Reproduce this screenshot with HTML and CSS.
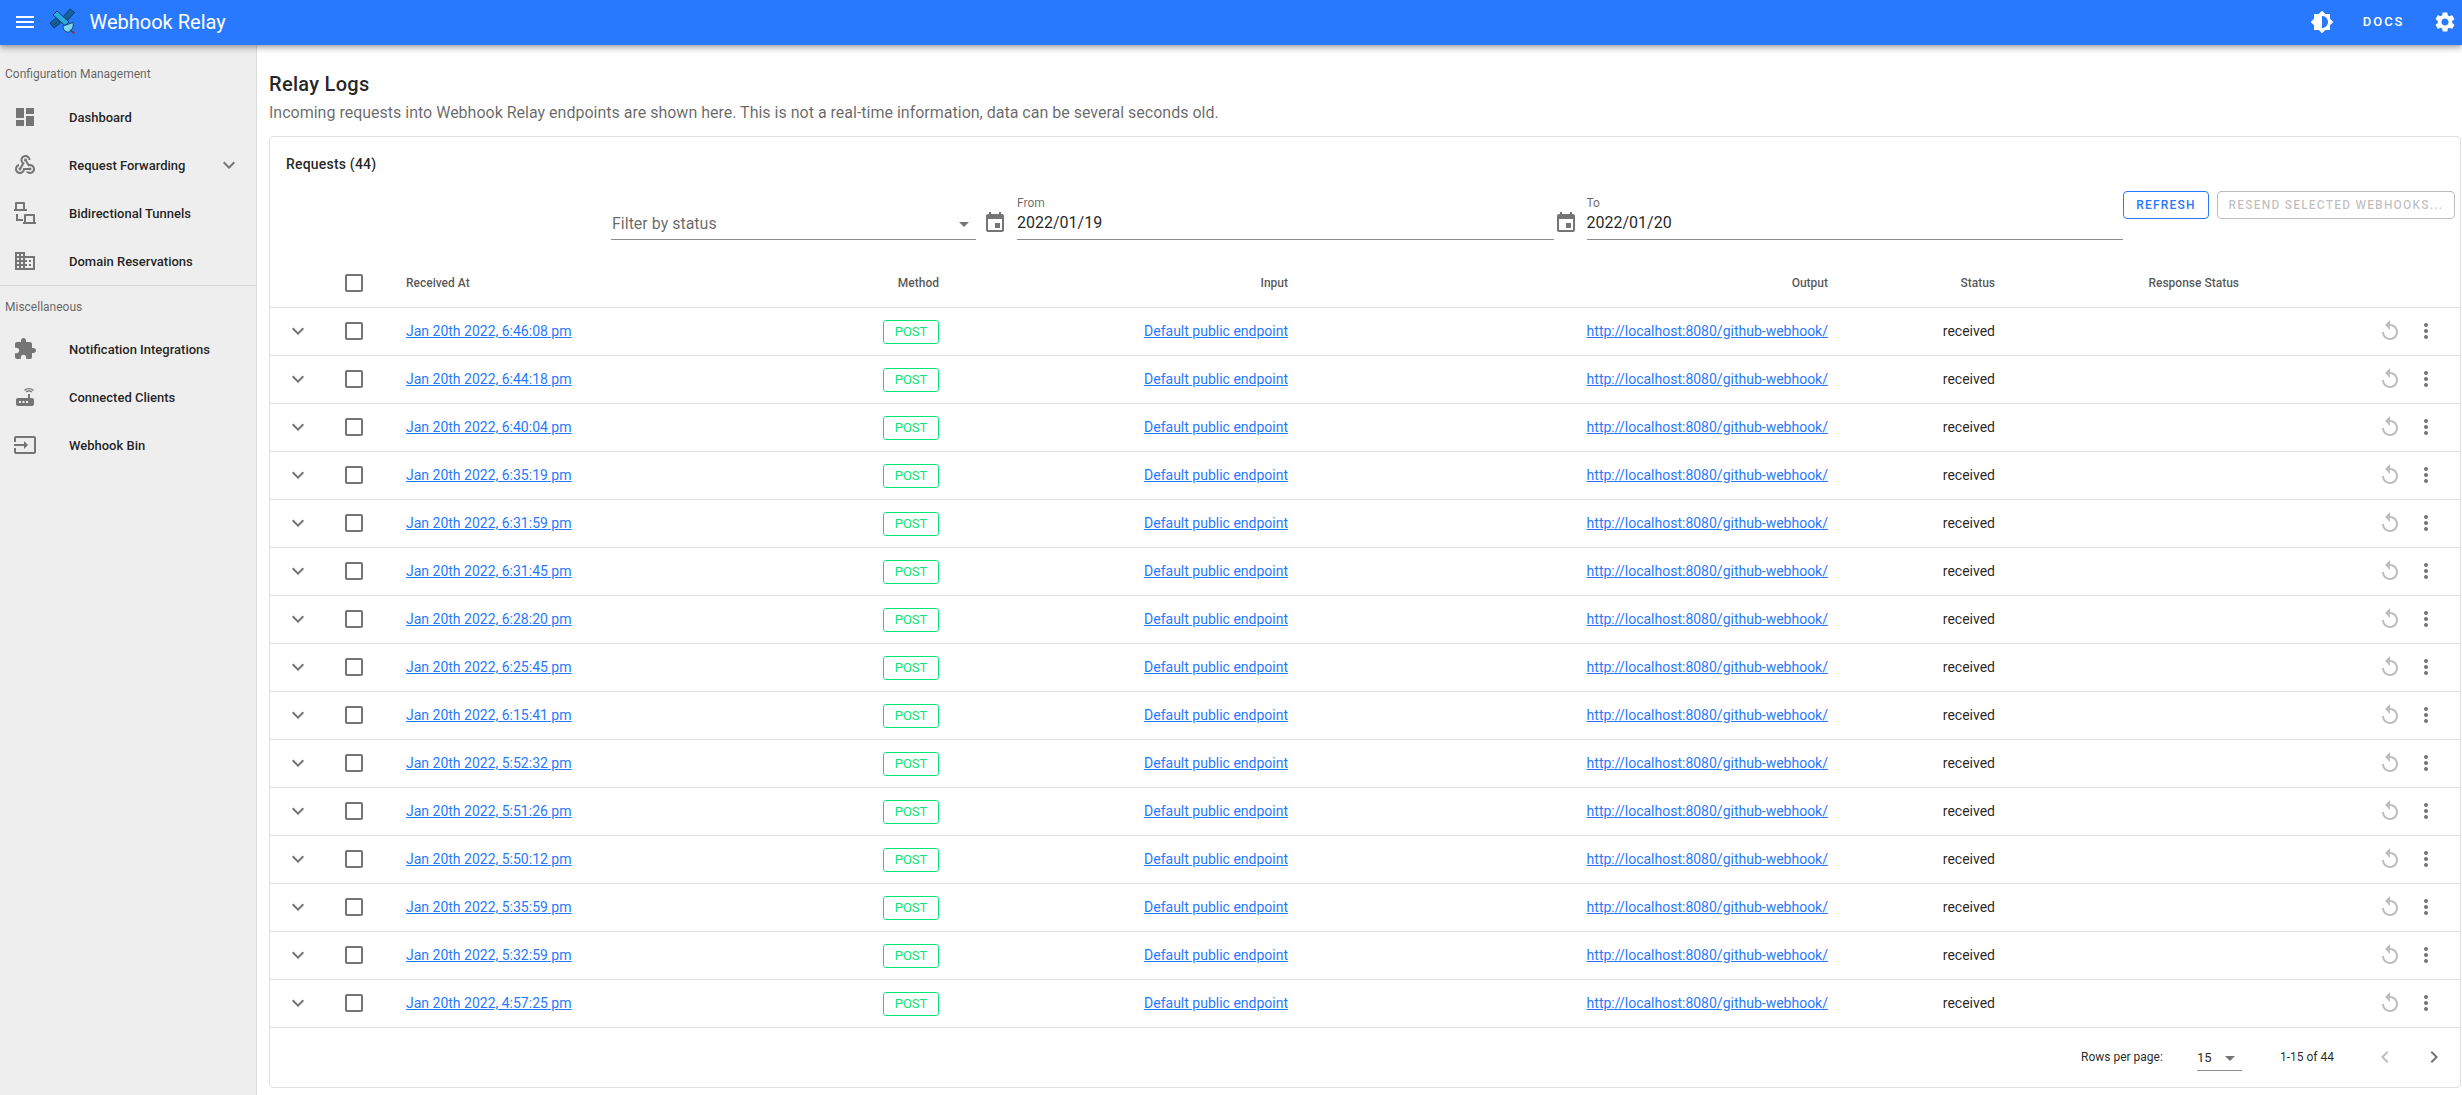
FILE: index.html
```html
<!DOCTYPE html>
<html lang="en">
<head>
<meta charset="utf-8">
<title>Webhook Relay</title>
<link rel="stylesheet" href="styles.css">
</head>
<body>
<svg class="sprite" xmlns="http://www.w3.org/2000/svg">
<symbol id="i-menu" viewBox="0 0 24 24"><path d="M3 18h18v-2H3v2zm0-5h18v-2H3v2zm0-7v2h18V6H3z"/></symbol>
<symbol id="i-dash" viewBox="0 0 24 24"><path d="M3 13h8V3H3v10zm0 8h8v-6H3v6zm10 0h8V11h-8v10zm0-18v6h8V3h-8z"/></symbol>
<symbol id="i-hook" viewBox="0 0 24 24"><path d="M10 15h5.88c.27-.31.67-.5 1.12-.5.83 0 1.5.67 1.5 1.5s-.67 1.5-1.5 1.5c-.44 0-.84-.19-1.12-.5H11.9c-.46 2.28-2.48 4-4.9 4-2.76 0-5-2.24-5-5 0-2.42 1.72-4.44 4-4.9v2.07C4.84 13.58 4 14.7 4 16c0 1.65 1.35 3 3 3s3-1.35 3-3v-1zm2.5-11c1.65 0 3 1.35 3 3h2c0-2.76-2.24-5-5-5s-5 2.24-5 5c0 1.43.6 2.71 1.55 3.62l-2.35 3.9c-.68.14-1.2.75-1.2 1.48 0 .83.67 1.5 1.5 1.5s1.5-.67 1.5-1.5c0-.16-.02-.31-.07-.45l3.38-5.63C10.49 9.61 9.5 8.42 9.5 7c0-1.65 1.35-3 3-3zm4.5 9c-.64 0-1.23.2-1.72.54l-3.05-5.07C11.53 8.35 11 7.74 11 7c0-.83.67-1.5 1.5-1.5S14 6.17 14 7c0 .15-.02.29-.06.43l2.19 3.65c.28-.05.57-.08.87-.08 2.76 0 5 2.24 5 5s-2.24 5-5 5c-1.85 0-3.47-1.01-4.33-2.5h2.67c.48.32 1.05.5 1.66.5 1.65 0 3-1.35 3-3s-1.35-3-3-3z"/></symbol>
<symbol id="i-tunnel" viewBox="0 0 24 24"><path d="M3 1h8a1 1 0 0 1 1 1v6h2v2H1V8h1V2a1 1 0 0 1 1-1zm1 2v5h6V3H4zM12 13h9a1 1 0 0 1 1 1v7h1v2H10v-2h1v-7a1 1 0 0 1 1-1zm1 2v6h7v-6h-7zM3 13h2v5h5v2H3v-7z"/></symbol>
<symbol id="i-domain" viewBox="0 0 24 24"><path d="M12 7V3H2v18h20V7H12zM6 19H4v-2h2v2zm0-4H4v-2h2v2zm0-4H4V9h2v2zm0-4H4V5h2v2zm4 12H8v-2h2v2zm0-4H8v-2h2v2zm0-4H8V9h2v2zm0-4H8V5h2v2zm10 12h-8v-2h2v-2h-2v-2h2v-2h-2V9h8v10zm-2-8h-2v2h2v-2zm0 4h-2v2h2v-2z"/></symbol>
<symbol id="i-ext" viewBox="0 0 24 24"><path d="M20.500 11H19V7c0-1.100-.9-2-2-2h-4V3.500C13 2.120 11.880 1 10.500 1S8 2.120 8 3.500V5H4c-1.100 0-1.990.9-1.990 2v3.800H3.500c1.490 0 2.700 1.210 2.700 2.700s-1.210 2.700-2.700 2.700H2V20c0 1.100.9 2 2 2h3.800v-1.500c0-1.490 1.210-2.700 2.700-2.700 1.490 0 2.700 1.210 2.700 2.700V22H17c1.100 0 2-.9 2-2v-4h1.500c1.380 0 2.500-1.120 2.500-2.500S21.880 11 20.500 11z"/></symbol>
<symbol id="i-router" viewBox="0 0 24 24"><path d="M20.200 5.900l.8-.8C19.600 3.700 17.800 3 16 3s-3.600.7-5 2.100l.8.8C13 4.800 14.500 4.200 16 4.200s3 .6 4.200 1.700zm-.9.8c-.9-.9-2.100-1.400-3.300-1.400s-2.400.5-3.300 1.400l.8.8c.7-.7 1.600-1 2.500-1 .9 0 1.800.3 2.500 1l.8-.8zM19 13h-2V9h-2v4H5c-1.100 0-2 .9-2 2v4c0 1.100.9 2 2 2h14c1.100 0 2-.9 2-2v-4c0-1.100-.9-2-2-2zM8 18H6v-2h2v2zm3.500 0h-2v-2h2v2zm3.500 0h-2v-2h2v2z"/></symbol>
<symbol id="i-input" viewBox="0 0 24 24"><path d="M21 3.010H3c-1.100 0-2 .9-2 2V9h2V4.990h18v14.030H3V15H1v4.010c0 1.100.9 1.980 2 1.980h18c1.100 0 2-.88 2-1.980v-14c0-1.110-.9-2-2-2zM11 16l4-4-4-4v3H1v2h10v3z"/></symbol>
<symbol id="i-bright" viewBox="0 0 24 24"><path d="M20 15.310L23.310 12 20 8.690V4h-4.690L12 .69 8.690 4H4v4.690L.69 12 4 15.310V20h4.690L12 23.310 15.310 20H20v-4.690zM12 18V6c3.310 0 6 2.690 6 6s-2.690 6-6 6z"/></symbol>
<symbol id="i-gear" viewBox="0 0 24 24"><path d="M19.140 12.940c.04-.3.06-.61.06-.94 0-.32-.02-.64-.07-.94l2.030-1.580c.18-.14.23-.41.12-.61l-1.920-3.320c-.12-.22-.37-.29-.59-.22l-2.390.96c-.5-.38-1.030-.7-1.620-.94l-.36-2.540c-.04-.24-.24-.41-.48-.41h-3.840c-.24 0-.43.17-.47.41l-.36 2.540c-.59.24-1.130.57-1.620.94l-2.390-.96c-.22-.08-.47 0-.59.22L2.740 8.870c-.12.21-.08.47.12.61l2.030 1.580c-.05.3-.09.63-.09.94s.02.64.07.94l-2.030 1.580c-.18.14-.23.41-.12.61l1.920 3.320c.12.22.37.29.59.22l2.390-.96c.5.38 1.030.7 1.620.94l.36 2.540c.05.24.24.41.48.41h3.840c.24 0 .44-.17.47-.41l.36-2.540c.59-.24 1.130-.56 1.620-.94l2.390.96c.22.08.47 0 .59-.22l1.920-3.320c.12-.22.07-.47-.12-.61l-2.010-1.580zM12 15.600c-1.980 0-3.600-1.620-3.600-3.600s1.620-3.600 3.600-3.600 3.600 1.620 3.600 3.600-1.620 3.600-3.600 3.600z"/></symbol>
<symbol id="i-replay" viewBox="0 0 24 24"><path d="M12 5V1L7 6l5 5V7c3.310 0 6 2.690 6 6s-2.690 6-6 6-6-2.690-6-6H4c0 4.420 3.580 8 8 8s8-3.580 8-8-3.580-8-8-8z"/></symbol>
<symbol id="i-more" viewBox="0 0 24 24"><path d="M12 8c1.100 0 2-.9 2-2s-.9-2-2-2-2 .9-2 2 .9 2 2 2zm0 2c-1.100 0-2 .9-2 2s.9 2 2 2 2-.9 2-2-.9-2-2-2zm0 6c-1.100 0-2 .9-2 2s.9 2 2 2 2-.9 2-2-.9-2-2-2z"/></symbol>
<symbol id="i-check" viewBox="0 0 24 24"><path d="M19 5v14H5V5h14m0-2H5c-1.100 0-2 .9-2 2v14c0 1.100.9 2 2 2h14c1.100 0 2-.9 2-2V5c0-1.100-.9-2-2-2z"/></symbol>
<symbol id="i-down" viewBox="0 0 24 24"><path d="M16.590 8.590L12 13.170 7.410 8.590 6 10l6 6 6-6z"/></symbol>
<symbol id="i-event" viewBox="0 0 24 24"><path d="M17 12h-5v5h5v-5zM16 1v2H8V1H6v2H5c-1.110 0-1.990.9-1.990 2L3 19c0 1.100.89 2 2 2h14c1.100 0 2-.9 2-2V5c0-1.100-.9-2-2-2h-1V1h-2zm3 18H5V8h14v11z"/></symbol>
<symbol id="i-drop" viewBox="0 0 24 24"><path d="M7 10l5 5 5-5z"/></symbol>
<symbol id="i-left" viewBox="0 0 24 24"><path d="M15.410 7.410L14 6l-6 6 6 6 1.410-1.410L10.830 12z"/></symbol>
<symbol id="i-right" viewBox="0 0 24 24"><path d="M10 6L8.590 7.410 13.170 12l-4.580 4.590L10 18l6-6z"/></symbol>
</svg>

<header class="appbar">
  <svg class="ico ico-white menu-btn"><use href="#i-menu"/></svg>
  <svg class="logo" viewBox="0 0 40 32">
    <g stroke="#0b2f55" stroke-width=".8" stroke-linejoin="round">
      <path d="M19 13l7-8 4.500 3.500-7.500 8.500z" fill="#14629c"/>
      <path d="M6 19l6-5 4.500 5-6.500 5z" fill="#14629c"/>
      <path d="M9 11l4-4 12 11-4 3.500z" fill="#29abe2"/>
      <path d="M19 22l10-3.500c1.500 5-3 10.500-6 9.500-3-1-4-3-4-6z" fill="#7fd4f2"/>
      <path d="M22.500 16l2-2M10 21l3-3" fill="none"/>
    </g>
    <path d="M26 25.500l3 3" stroke="#222" stroke-width="1"/>
    <circle cx="29.500" cy="28.500" r="1.200" fill="#b3202a"/>
  </svg>
  <span class="brand">Webhook Relay</span>
  <span class="spacer"></span>
  <svg class="ico ico-white bright-btn"><use href="#i-bright"/></svg>
  <span class="docs">DOCS</span>
  <svg class="ico ico-white gear-btn"><use href="#i-gear"/></svg>
</header>

<div class="shell">
  <nav class="sidebar">
    <div class="nav-head nav-head-first">Configuration Management</div>
    <a class="nav-item"><svg class="ico ico-grey"><use href="#i-dash"/></svg><span>Dashboard</span></a>
    <a class="nav-item"><svg class="ico ico-grey"><use href="#i-hook"/></svg><span>Request Forwarding</span><svg class="ico ico-grey nav-chev"><use href="#i-down"/></svg></a>
    <a class="nav-item"><svg class="ico ico-grey"><use href="#i-tunnel"/></svg><span>Bidirectional Tunnels</span></a>
    <a class="nav-item"><svg class="ico ico-grey"><use href="#i-domain"/></svg><span>Domain Reservations</span></a>
    <hr class="nav-div">
    <div class="nav-head">Miscellaneous</div>
    <a class="nav-item"><svg class="ico ico-grey"><use href="#i-ext"/></svg><span>Notification Integrations</span></a>
    <a class="nav-item"><svg class="ico ico-grey"><use href="#i-router"/></svg><span>Connected Clients</span></a>
    <a class="nav-item"><svg class="ico ico-grey"><use href="#i-input"/></svg><span>Webhook Bin</span></a>
  </nav>

  <main class="main">
    <h1 class="page-title">Relay Logs</h1>
    <p class="page-desc">Incoming requests into Webhook Relay endpoints are shown here. This is not a real-time information, data can be several seconds old.</p>

    <section class="card">
      <h2 class="card-title">Requests (44)</h2>
      <div class="toolbar">
        <div class="field field-select"><span class="field-ph">Filter by status</span><svg class="ico ico-grey"><use href="#i-drop"/></svg></div>
        <svg class="ico ico-grey cal"><use href="#i-event"/></svg>
        <div class="field field-date"><label class="field-label">From</label><span class="field-val">2022/01/19</span></div>
        <svg class="ico ico-grey cal cal-second"><use href="#i-event"/></svg>
        <div class="field field-date"><label class="field-label">To</label><span class="field-val">2022/01/20</span></div>
        <button class="btn btn-primary">REFRESH</button>
        <button class="btn btn-disabled">RESEND SELECTED WEBHOOKS...</button>
      </div>

      <table class="grid">
        <colgroup><col class="c-exp"><col class="c-chk"><col class="c-rec"><col class="c-met"><col class="c-inp"><col class="c-out"><col class="c-sta"><col class="c-res"><col class="c-act"></colgroup>
        <thead>
          <tr>
            <th></th>
            <th><svg class="ico ico-grey"><use href="#i-check"/></svg></th>
            <th class="left">Received At</th><th>Method</th><th>Input</th><th>Output</th><th>Status</th><th>Response Status</th><th></th>
          </tr>
        </thead>
        <tbody>
          <tr><td class="ctr"><svg class="ico ico-grey"><use href="#i-down"/></svg></td><td class="ctr"><svg class="ico ico-grey"><use href="#i-check"/></svg></td><td class="left"><a class="lnk">Jan 20th 2022, 6:46:08 pm</a></td><td><span class="chip">POST</span></td><td><a class="lnk">Default public endpoint</a></td><td><a class="lnk">http://localhost:8080/github-webhook/</a></td><td>received</td><td></td><td class="acts"><svg class="ico ico-light"><use href="#i-replay"/></svg><svg class="ico ico-grey"><use href="#i-more"/></svg></td></tr>
          <tr><td class="ctr"><svg class="ico ico-grey"><use href="#i-down"/></svg></td><td class="ctr"><svg class="ico ico-grey"><use href="#i-check"/></svg></td><td class="left"><a class="lnk">Jan 20th 2022, 6:44:18 pm</a></td><td><span class="chip">POST</span></td><td><a class="lnk">Default public endpoint</a></td><td><a class="lnk">http://localhost:8080/github-webhook/</a></td><td>received</td><td></td><td class="acts"><svg class="ico ico-light"><use href="#i-replay"/></svg><svg class="ico ico-grey"><use href="#i-more"/></svg></td></tr>
          <tr><td class="ctr"><svg class="ico ico-grey"><use href="#i-down"/></svg></td><td class="ctr"><svg class="ico ico-grey"><use href="#i-check"/></svg></td><td class="left"><a class="lnk">Jan 20th 2022, 6:40:04 pm</a></td><td><span class="chip">POST</span></td><td><a class="lnk">Default public endpoint</a></td><td><a class="lnk">http://localhost:8080/github-webhook/</a></td><td>received</td><td></td><td class="acts"><svg class="ico ico-light"><use href="#i-replay"/></svg><svg class="ico ico-grey"><use href="#i-more"/></svg></td></tr>
          <tr><td class="ctr"><svg class="ico ico-grey"><use href="#i-down"/></svg></td><td class="ctr"><svg class="ico ico-grey"><use href="#i-check"/></svg></td><td class="left"><a class="lnk">Jan 20th 2022, 6:35:19 pm</a></td><td><span class="chip">POST</span></td><td><a class="lnk">Default public endpoint</a></td><td><a class="lnk">http://localhost:8080/github-webhook/</a></td><td>received</td><td></td><td class="acts"><svg class="ico ico-light"><use href="#i-replay"/></svg><svg class="ico ico-grey"><use href="#i-more"/></svg></td></tr>
          <tr><td class="ctr"><svg class="ico ico-grey"><use href="#i-down"/></svg></td><td class="ctr"><svg class="ico ico-grey"><use href="#i-check"/></svg></td><td class="left"><a class="lnk">Jan 20th 2022, 6:31:59 pm</a></td><td><span class="chip">POST</span></td><td><a class="lnk">Default public endpoint</a></td><td><a class="lnk">http://localhost:8080/github-webhook/</a></td><td>received</td><td></td><td class="acts"><svg class="ico ico-light"><use href="#i-replay"/></svg><svg class="ico ico-grey"><use href="#i-more"/></svg></td></tr>
          <tr><td class="ctr"><svg class="ico ico-grey"><use href="#i-down"/></svg></td><td class="ctr"><svg class="ico ico-grey"><use href="#i-check"/></svg></td><td class="left"><a class="lnk">Jan 20th 2022, 6:31:45 pm</a></td><td><span class="chip">POST</span></td><td><a class="lnk">Default public endpoint</a></td><td><a class="lnk">http://localhost:8080/github-webhook/</a></td><td>received</td><td></td><td class="acts"><svg class="ico ico-light"><use href="#i-replay"/></svg><svg class="ico ico-grey"><use href="#i-more"/></svg></td></tr>
          <tr><td class="ctr"><svg class="ico ico-grey"><use href="#i-down"/></svg></td><td class="ctr"><svg class="ico ico-grey"><use href="#i-check"/></svg></td><td class="left"><a class="lnk">Jan 20th 2022, 6:28:20 pm</a></td><td><span class="chip">POST</span></td><td><a class="lnk">Default public endpoint</a></td><td><a class="lnk">http://localhost:8080/github-webhook/</a></td><td>received</td><td></td><td class="acts"><svg class="ico ico-light"><use href="#i-replay"/></svg><svg class="ico ico-grey"><use href="#i-more"/></svg></td></tr>
          <tr><td class="ctr"><svg class="ico ico-grey"><use href="#i-down"/></svg></td><td class="ctr"><svg class="ico ico-grey"><use href="#i-check"/></svg></td><td class="left"><a class="lnk">Jan 20th 2022, 6:25:45 pm</a></td><td><span class="chip">POST</span></td><td><a class="lnk">Default public endpoint</a></td><td><a class="lnk">http://localhost:8080/github-webhook/</a></td><td>received</td><td></td><td class="acts"><svg class="ico ico-light"><use href="#i-replay"/></svg><svg class="ico ico-grey"><use href="#i-more"/></svg></td></tr>
          <tr><td class="ctr"><svg class="ico ico-grey"><use href="#i-down"/></svg></td><td class="ctr"><svg class="ico ico-grey"><use href="#i-check"/></svg></td><td class="left"><a class="lnk">Jan 20th 2022, 6:15:41 pm</a></td><td><span class="chip">POST</span></td><td><a class="lnk">Default public endpoint</a></td><td><a class="lnk">http://localhost:8080/github-webhook/</a></td><td>received</td><td></td><td class="acts"><svg class="ico ico-light"><use href="#i-replay"/></svg><svg class="ico ico-grey"><use href="#i-more"/></svg></td></tr>
          <tr><td class="ctr"><svg class="ico ico-grey"><use href="#i-down"/></svg></td><td class="ctr"><svg class="ico ico-grey"><use href="#i-check"/></svg></td><td class="left"><a class="lnk">Jan 20th 2022, 5:52:32 pm</a></td><td><span class="chip">POST</span></td><td><a class="lnk">Default public endpoint</a></td><td><a class="lnk">http://localhost:8080/github-webhook/</a></td><td>received</td><td></td><td class="acts"><svg class="ico ico-light"><use href="#i-replay"/></svg><svg class="ico ico-grey"><use href="#i-more"/></svg></td></tr>
          <tr><td class="ctr"><svg class="ico ico-grey"><use href="#i-down"/></svg></td><td class="ctr"><svg class="ico ico-grey"><use href="#i-check"/></svg></td><td class="left"><a class="lnk">Jan 20th 2022, 5:51:26 pm</a></td><td><span class="chip">POST</span></td><td><a class="lnk">Default public endpoint</a></td><td><a class="lnk">http://localhost:8080/github-webhook/</a></td><td>received</td><td></td><td class="acts"><svg class="ico ico-light"><use href="#i-replay"/></svg><svg class="ico ico-grey"><use href="#i-more"/></svg></td></tr>
          <tr><td class="ctr"><svg class="ico ico-grey"><use href="#i-down"/></svg></td><td class="ctr"><svg class="ico ico-grey"><use href="#i-check"/></svg></td><td class="left"><a class="lnk">Jan 20th 2022, 5:50:12 pm</a></td><td><span class="chip">POST</span></td><td><a class="lnk">Default public endpoint</a></td><td><a class="lnk">http://localhost:8080/github-webhook/</a></td><td>received</td><td></td><td class="acts"><svg class="ico ico-light"><use href="#i-replay"/></svg><svg class="ico ico-grey"><use href="#i-more"/></svg></td></tr>
          <tr><td class="ctr"><svg class="ico ico-grey"><use href="#i-down"/></svg></td><td class="ctr"><svg class="ico ico-grey"><use href="#i-check"/></svg></td><td class="left"><a class="lnk">Jan 20th 2022, 5:35:59 pm</a></td><td><span class="chip">POST</span></td><td><a class="lnk">Default public endpoint</a></td><td><a class="lnk">http://localhost:8080/github-webhook/</a></td><td>received</td><td></td><td class="acts"><svg class="ico ico-light"><use href="#i-replay"/></svg><svg class="ico ico-grey"><use href="#i-more"/></svg></td></tr>
          <tr><td class="ctr"><svg class="ico ico-grey"><use href="#i-down"/></svg></td><td class="ctr"><svg class="ico ico-grey"><use href="#i-check"/></svg></td><td class="left"><a class="lnk">Jan 20th 2022, 5:32:59 pm</a></td><td><span class="chip">POST</span></td><td><a class="lnk">Default public endpoint</a></td><td><a class="lnk">http://localhost:8080/github-webhook/</a></td><td>received</td><td></td><td class="acts"><svg class="ico ico-light"><use href="#i-replay"/></svg><svg class="ico ico-grey"><use href="#i-more"/></svg></td></tr>
          <tr><td class="ctr"><svg class="ico ico-grey"><use href="#i-down"/></svg></td><td class="ctr"><svg class="ico ico-grey"><use href="#i-check"/></svg></td><td class="left"><a class="lnk">Jan 20th 2022, 4:57:25 pm</a></td><td><span class="chip">POST</span></td><td><a class="lnk">Default public endpoint</a></td><td><a class="lnk">http://localhost:8080/github-webhook/</a></td><td>received</td><td></td><td class="acts"><svg class="ico ico-light"><use href="#i-replay"/></svg><svg class="ico ico-grey"><use href="#i-more"/></svg></td></tr>
        </tbody>
      </table>

      <footer class="pager">
        <span class="pager-label">Rows per page:</span>
        <span class="pager-sel"><span>15</span><svg class="ico ico-grey"><use href="#i-drop"/></svg></span>
        <span class="pager-count">1-15 of 44</span>
        <svg class="ico ico-light pager-prev"><use href="#i-left"/></svg>
        <svg class="ico ico-grey pager-next"><use href="#i-right"/></svg>
      </footer>
    </section>
  </main>
</div>
</body>
</html>
```

FILE: styles.css
```css
* { box-sizing: border-box; }
html, body { margin: 0; padding: 0; height: 100%; }
body { font-family: Roboto, "Liberation Sans", sans-serif; color: rgba(0,0,0,.87); background: #fff; overflow: hidden; }
.sprite { display: none; }
.ico { width: 24px; height: 24px; flex: none; display: block; }
.ico-white { fill: #fff; }
.ico-grey { fill: #757575; }
.ico-light { fill: #bdbdbd; }

.appbar { position: relative; z-index: 2; height: 45px; padding-bottom: 2px; background: #2979ff; display: flex; align-items: center; color: #fff; box-shadow: 0 2px 4px -1px rgba(0,0,0,.2), 0 4px 5px 0 rgba(0,0,0,.14), 0 1px 10px 0 rgba(0,0,0,.12); }
.menu-btn { margin-left: 13px; }
.logo { width: 40px; height: 32px; margin-left: 7px; margin-bottom: 3px; }
.brand { font-size: 20px; margin-left: 5.5px; }
.spacer { flex: 1; }
.bright-btn { margin-right: 29px; }
.docs { font-size: 13px; font-weight: 500; letter-spacing: 2px; margin-right: 28px; }
.gear-btn { margin-right: 5.5px; }

.shell { display: flex; height: 1050px; }
.sidebar { width: 257px; flex: none; background: #eeeeee; border-right: 1px solid #dcdcdc; }
.nav-head { font-size: 12px; color: rgba(0,0,0,.6); padding: 6px 5px 0; line-height: 16px; height: 32px; margin-top: 7px; }
.nav-head-first { margin-top: 15px; height: 33px; }
.nav-item { display: flex; align-items: center; height: 48px; padding-left: 13px; font-size: 13px; font-weight: 500; color: rgba(0,0,0,.87); }
.nav-item span { margin-left: 32px; flex: none; width: 156px; }
.nav-chev { margin-left: -8px; }
.nav-div { margin: 0; border: 0; border-top: 1px solid #d6d6d6; }

.main { flex: 1; min-width: 0; padding: 0 1px 0 12px; }
.page-title { margin: 26px 0 0; font-size: 20px; font-weight: 500; line-height: 26px; letter-spacing: .3px; }
.page-desc { margin: 4px 0 0; font-size: 16px; line-height: 24px; color: rgba(0,0,0,.6); }
.card { margin-top: 11px; height: 952px; border: 1px solid #e0e0e0; border-radius: 4px; display: flex; flex-direction: column; }
.card-title { margin: 17px 0 0 16px; font-size: 14px; font-weight: 500; line-height: 20px; letter-spacing: .2px; }

.toolbar { display: flex; align-items: flex-end; height: 66px; padding-left: 341px; padding-right: 5px; }
.field { border-bottom: 1px solid #8c8c8c; height: 46px; }
.field-select { width: 365px; display: flex; align-items: flex-end; justify-content: space-between; padding: 0 0 3px 1px; }
.field-ph { font-size: 16px; color: rgba(0,0,0,.6); line-height: 24px; flex: 1; }
.field-date { flex: 1; display: flex; flex-direction: column; min-width: 0; }
.field-label { font-size: 12px; line-height: 16px; color: rgba(0,0,0,.6); margin-top: 1px; }
.field-val { font-size: 16px; line-height: 24px; }
.cal { margin: 0 10px 5px 7px; }
.cal-second { margin: 0 9px 5px 0; }
.btn { font-family: inherit; font-size: 12px; font-weight: 500; letter-spacing: 1.2px; height: 28px; border-radius: 4px; background: #fff; padding: 0; margin-bottom: 21px; }
.btn-primary { width: 86px; color: #2979ff; border: 1px solid #2979ff; }
.btn-disabled { width: 238px; margin-left: 8px; color: rgba(0,0,0,.26); border: 1px solid #bdbdbd; }

.grid { border-collapse: collapse; table-layout: fixed; width: 100%; font-size: 14px; }
.c-exp { width: 56px; } .c-chk { width: 56px; } .c-rec { width: 378px; } .c-met { width: 195px; }
.c-inp { width: 349px; } .c-out { width: 540px; } .c-sta { width: 167px; } .c-res { width: 244px; }
.grid th { height: 67px; padding: 20px 16px 0 0; font-size: 12px; font-weight: 500; color: rgba(0,0,0,.68); text-align: right; border-bottom: 1px solid #e0e0e0; }
.grid td { height: 48px; padding: 0 16px 0 0; text-align: right; border-bottom: 1px solid #e0e0e0; }
.grid th.left, .grid td.left { text-align: left; padding-left: 24px; }
.grid td.ctr, .grid th:nth-child(2) { padding-right: 0; }
.grid td.ctr .ico, .grid th .ico { margin: 0 auto; }
.lnk { color: #2979ff; text-decoration: underline; }
.chip { display: inline-block; width: 56px; height: 24px; margin-top: 2px; line-height: 22px; font-size: 13px; text-align: center; color: #00e676; border: 1px solid #00e676; border-radius: 3px; vertical-align: middle; }
.grid td.acts { padding: 0 22px 0 0; }
.acts .ico { display: inline-block; vertical-align: middle; margin-left: 12px; }

.pager { flex: 1; display: flex; align-items: center; font-size: 12px; color: rgba(0,0,0,.87); padding-left: 1811px; }
.pager-label { width: 116px; flex: none; }
.pager-sel { width: 45px; flex: none; height: 26px; margin-top: 2px; display: flex; align-items: center; justify-content: space-between; border-bottom: 1px solid #8c8c8c; font-size: 13px; }
.pager-count { margin-left: 38px; width: 80px; flex: none; }
.pager-prev { margin-left: 13px; }
.pager-next { margin-left: 25px; }
```
